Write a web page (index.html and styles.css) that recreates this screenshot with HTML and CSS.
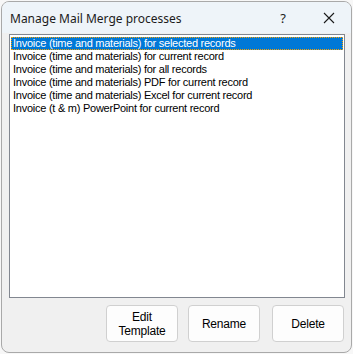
FILE: index.html
```html
<!DOCTYPE html>
<html lang="en">
<head>
  <meta charset="UTF-8" />
  <title>Manage Mail Merge processes</title>
  <link rel="stylesheet" href="styles.css">
</head>
<body>
  <div class="window">
    <div class="title-bar">
      <span class="title">Manage Mail Merge processes</span>
      <span class="title-btn help">?</span>
      <span class="title-btn close">
        <svg width="12" height="12" viewBox="0 0 12 12">
          <path d="M1 1 L11 11 M11 1 L1 11" stroke="#1b1b1b" stroke-width="1.1" fill="none"/>
        </svg>
      </span>
    </div>
    <div class="dialog-body">
      <div class="list-box">
        <div class="list-item selected">Invoice (time and materials) for selected records</div>
        <div class="list-item">Invoice (time and materials) for current record</div>
        <div class="list-item">Invoice (time and materials) for all records</div>
        <div class="list-item">Invoice (time and materials) PDF for current record</div>
        <div class="list-item">Invoice (time and materials) Excel for current record</div>
        <div class="list-item">Invoice (t &amp; m) PowerPoint for current record</div>
      </div>
      <div class="button-row">
        <button class="btn" type="button">Edit<br>Template</button>
        <button class="btn" type="button">Rename</button>
        <button class="btn btn-last" type="button">Delete</button>
      </div>
    </div>
  </div>
</body>
</html>
```

FILE: styles.css
```css
:root {
  --frame: #a9a9a9;
  --title-bg: #eef4f9;
  --face: #f0f0f0;
  --list-border: #828790;
  --select: #0078d7;
  --btn-border: #d0d0d0;
}

body {
  margin: 0;
  background: #f7f7f7;
  width: 353px;
  height: 354px;
  overflow: hidden;
}

.window {
  margin: 1px;
  width: 349px;
  height: 350px;
  border: 1px solid var(--frame);
  border-radius: 8px;
  overflow: hidden;
  display: flex;
  flex-direction: column;
  background: var(--face);
}

.title-bar {
  height: 31px;
  flex: none;
  display: flex;
  align-items: center;
  background: var(--title-bg);
  font-family: "Noto Sans", "Open Sans", sans-serif;
  font-size: 12px;
  color: #1b1b1b;
}

.title {
  flex: 1;
  padding-left: 8px;
  padding-top: 1px;
}

.title-btn {
  display: flex;
  align-items: center;
  justify-content: center;
  height: 100%;
}

.help {
  width: 24px;
  margin-right: 22px;
  font-size: 13px;
}

.close {
  width: 24px;
  margin-right: 10px;
}

.dialog-body {
  flex: 1;
  display: flex;
  flex-direction: column;
  padding: 1px 6px 8px 7px;
}

.list-box {
  height: 258px;
  background: #fff;
  border: 1px solid var(--list-border);
  padding: 2px 1px;
  font-family: "Liberation Sans", Arial, sans-serif;
  font-size: 11px;
  letter-spacing: -0.25px;
  color: #000;
}

.list-item {
  height: 13px;
  line-height: 13px;
  padding-left: 2px;
  white-space: nowrap;
}

.list-item.selected {
  background: var(--select);
  color: #fff;
  outline: 1px dotted #f7a100;
  outline-offset: -1px;
}

.button-row {
  display: flex;
  justify-content: flex-end;
  gap: 10px;
  margin-top: 7px;
  padding-right: 1px;
}

.btn {
  width: 72px;
  height: 37px;
  padding: 0;
  background: #fdfdfd;
  border: 1px solid var(--btn-border);
  border-radius: 4px;
  font-family: "Liberation Sans", Arial, sans-serif;
  font-size: 12px;
  line-height: 14px;
  letter-spacing: -0.2px;
  color: #000;
}

.btn-last {
  margin-left: 2px;
}
```
